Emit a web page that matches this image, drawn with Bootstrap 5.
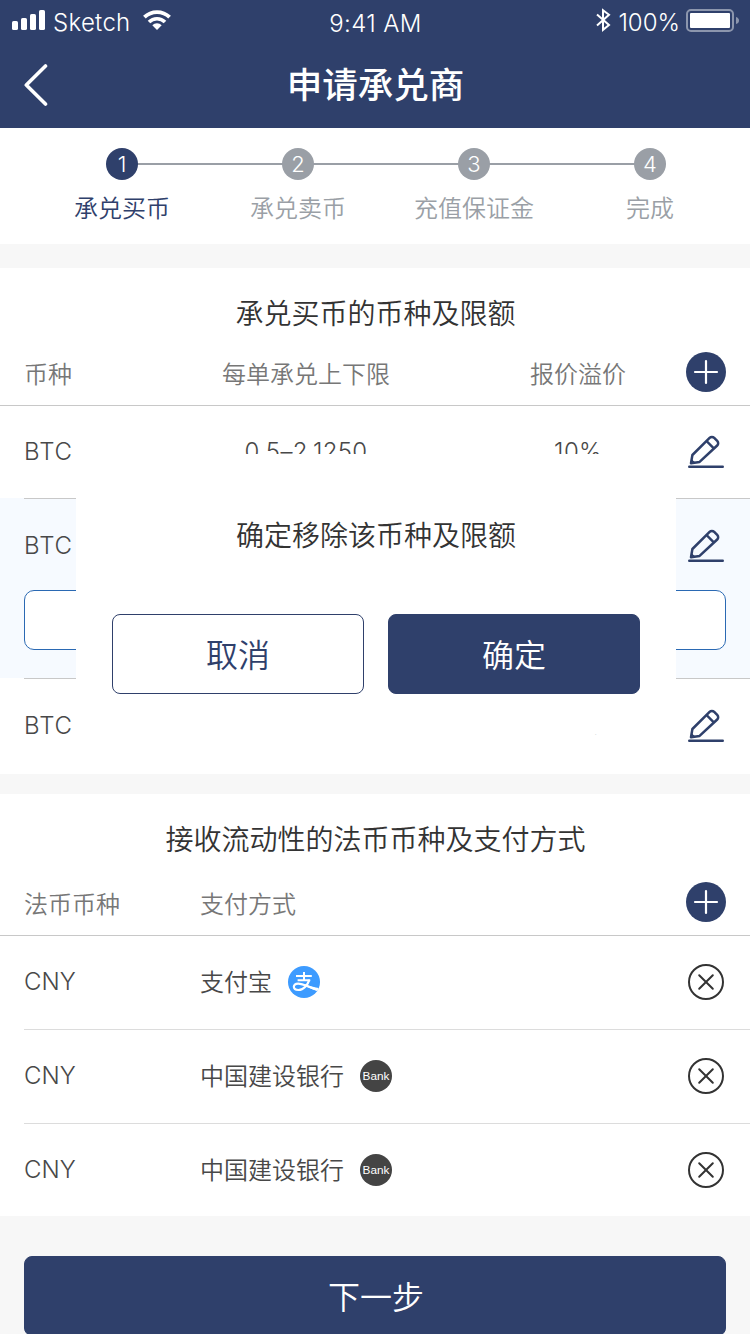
<!DOCTYPE html>
<html lang="zh-CN">
<head>
<meta charset="utf-8">
<meta name="viewport" content="width=device-width, initial-scale=1">
<title>申请承兑商</title>
<link href="https://cdn.jsdelivr.net/npm/bootstrap@5.3.0/dist/css/bootstrap.min.css" rel="stylesheet">
<style>
:root { --navy: #2f406b; --muted-step: #9a9fa6; }
html, body { height: 1334px; overflow: hidden; }
body { background: #f7f7f7; font-family: Inter, "Noto Sans CJK SC", sans-serif; font-size: 24px; font-weight: 350; line-height: 32px; color: #484848; width: 750px; }
svg { display: block; flex: none; }
.topbar { background: var(--navy); height: 128px; }
.statusbar { height: 40px; padding: 0 12px; }
.statusbar > div { flex: 1 1 0; }
.statusbar > div:last-child { margin-right: -1px; }
.carrier { margin: 5px 12px 0 8px; letter-spacing: .3px; }
.clock { padding-top: 7px; letter-spacing: .4px; }
.charge { margin: 6px 6px 0 7px; }
.titlebar { height: 88px; padding: 2px 24px 0; }
.titlebar h1 { font-size: 35.5px; line-height: 48px; font-weight: 500; margin: 0; padding: 2px 0 0 1px; }
.back-space { width: 24px; }
.steps { height: 116px; padding: 20px 12px 0 34px; }
.step { width: 176px; color: var(--muted-step); position: relative; }
.step .dot { width: 32px; height: 32px; line-height: 33px; font-size: 22px; border-radius: 50%; background: var(--muted-step); position: relative; z-index: 1; }
.step.on { color: var(--navy); }
.step.on .dot { background: var(--navy); }
.step + .step::before { content: ""; position: absolute; top: 15px; left: -88px; width: 176px; height: 2px; background: var(--muted-step); }
.step-name { margin-top: 13px; font-size: 24px; }
.panel-title { font-size: 28px; line-height: 40px; color: #333; padding: 26px 0 0 1px; font-weight: 350; margin: 0; }
.head { color: #777; border-bottom: 1px solid #c8c8c8; }
.head span { padding-top: 5px; }
.limits { display: grid; grid-template-columns: 84px 396px 148px 74px; align-items: center; }
.limits .pen { margin-right: 2px; }
.coin { letter-spacing: .9px; }
.amount { letter-spacing: .35px; }
.pays { display: grid; grid-template-columns: 176px 1fr 40px; align-items: center; }
.limits-panel { margin-top: 24px; height: 506px; }
.limits-panel .head { height: 72px; padding: 5px 24px 0; }
.pays-panel { margin-top: 20px; height: 422px; }
.pays-panel .head { height: 76px; padding: 9px 24px 0; }
.limit-row { height: 92px; padding: 0 24px; }
.picked .limit-row { height: 94px; padding-top: 1px; }
.picked .coin, .picked .pen { margin-top: -2px; }
.last-row { height: 93px; }
.last-row .amount { margin-top: 1px; }
.rule { height: 1px; margin-left: 24px; background: #c8c8c8; }
.picked { background: #f6faff; height: 180px; }
.remove-btn { width: 702px; height: 60px; margin: -3px 24px 0; background: #fff; border: 1px solid #2a69b3; border-radius: 10px; }
.pay-row { height: 93px; padding: 0 24px 2px; }
.pay-name { padding-top: 2px; }
.rule-light { height: 1px; margin-left: 24px; background: #dcdcdc; }
.bank { width: 32px; height: 32px; line-height: 32px; border-radius: 50%; background: #444; font-family: "Liberation Sans", sans-serif; font-size: 11.8px; font-weight: 400; margin-left: 16px; }
.btn-navy, .btn-line { height: 80px; border-radius: 8px; font-size: 32px; font-weight: 350; padding: 4px 0 0; border: 1px solid var(--navy); }
.btn-navy, .btn-navy:hover { background: var(--navy); color: #fff; }
.btn-line, .btn-line:hover { background: #fff; color: var(--navy); }
.confirm { position: absolute; left: 76px; top: 454px; width: 600px; height: 280px; background: #fff; padding: 62px 36px 40px; z-index: 5; }
.confirm p { font-size: 28px; line-height: 40px; color: #333; margin: 0 0 58px; }
.next { margin: 40px 24px 0; width: 702px; padding-left: 2px; }
</style>
</head>
<body class="position-relative">
<svg width="0" height="0" class="position-absolute">
  <symbol id="plus" viewBox="0 0 40 40"><circle cx="20" cy="20" r="20" fill="#2f406b"/><path d="M20 9v22M9 20h22" stroke="#fff" stroke-width="2.2" stroke-linecap="round"/></symbol>
  <symbol id="pen" viewBox="0 0 36 34" fill="none" stroke="#2f406b">
    <path d="M1.200 31.800h33.600" stroke-width="2.4" stroke-linecap="round"/>
    <path d="M3 28.300 4.400 20 21.600 2.900a3.200 3.200 0 0 1 4.600 0L29.200 5.900a3.200 3.200 0 0 1 0 4.600L11.600 26.900z" stroke-width="2.5" stroke-linejoin="round"/>
    <path d="M18.600 6.200l7.200 7.200" stroke-width="2.4"/>
    <path d="M3 28.400 3.600 24.800 7 27.600z" fill="#2f406b" stroke-width="1"/>
  </symbol>
  <symbol id="close" viewBox="0 0 36 36" fill="none" stroke="#333" stroke-width="2"><circle cx="18" cy="18" r="17"/><path d="M11.2 11.2l13.6 13.6M24.8 11.2 11.2 24.8" stroke-linecap="round"/></symbol>
</svg>

<header class="topbar text-white">
  <div class="statusbar d-flex align-items-center">
    <div class="d-flex align-items-center">
      <svg width="33" height="20" fill="#fff"><rect y="11" width="6" height="9" rx="1.6"/><rect x="9" y="8" width="6" height="12" rx="1.6"/><rect x="18" y="4" width="6" height="16" rx="1.6"/><rect x="27" width="6" height="20" rx="1.6"/></svg>
      <span class="carrier">Sketch</span>
      <svg width="28" height="20" fill="none" stroke="#fff"><path d="M1.4 7.2a18 18 0 0 1 25.2 0" stroke-width="3.8"/><path d="M6 12a11.3 11.3 0 0 1 16 0" stroke-width="3.6"/><path d="M14 20 9.3 15.2a6.7 6.7 0 0 1 9.4 0z" fill="#fff" stroke="none"/></svg>
    </div>
    <div class="text-center clock">9:41 AM</div>
    <div class="d-flex align-items-center justify-content-end">
      <svg width="15" height="24" fill="none" stroke="#fff" stroke-width="2"><path d="M1 6.500 13 17 7 21.800V2.200l6 4.600L1 17.500"/></svg>
      <span class="charge">100%</span>
      <svg width="53" height="24"><rect x="1" y="2" width="46" height="21" rx="4" fill="none" stroke="#fff" stroke-opacity=".45" stroke-width="2"/><rect x="4" y="5" width="40" height="15" rx="1" fill="#fff"/><path d="M50 9q3 1 3 3.500T50 16z" fill="#fff" fill-opacity=".45"/></svg>
    </div>
  </div>
  <div class="titlebar d-flex align-items-center">
    <svg width="24" height="42" fill="none" stroke="#fff" stroke-width="3.6" stroke-linecap="round" stroke-linejoin="round"><path d="M21.500 2 2.300 21l19.200 19"/></svg>
    <h1 class="flex-grow-1 text-center">申请承兑商</h1>
    <span class="back-space"></span>
  </div>
</header>

<nav class="steps d-flex bg-white text-center">
  <div class="step on"><div class="dot text-white mx-auto">1</div><div class="step-name">承兑买币</div></div>
  <div class="step"><div class="dot text-white mx-auto">2</div><div class="step-name">承兑卖币</div></div>
  <div class="step"><div class="dot text-white mx-auto">3</div><div class="step-name">充值保证金</div></div>
  <div class="step"><div class="dot text-white mx-auto">4</div><div class="step-name">完成</div></div>
</nav>

<section class="bg-white limits-panel">
  <h2 class="panel-title text-center">承兑买币的币种及限额</h2>
  <div class="head limits"><span>币种</span><span class="text-center">每单承兑上下限</span><span class="text-center">报价溢价</span><svg width="40" height="40" class="ms-auto"><use href="#plus"/></svg></div>
  <div class="limit-row limits"><span class="coin">BTC</span><span class="text-center amount">0.5–2.1250</span><span class="text-center amount">10%</span><svg width="36" height="34" class="ms-auto pen"><use href="#pen"/></svg></div>
  <div class="picked">
    <div class="rule"></div>
    <div class="limit-row limits"><span class="coin">BTC</span><span></span><span></span><svg width="36" height="34" class="ms-auto pen"><use href="#pen"/></svg></div>
    <div class="remove-btn"></div>
  </div>
  <div class="rule"></div>
  <div class="limit-row limits last-row"><span class="coin">BTC</span><span class="text-center amount">0.5–2.1250</span><span class="text-center amount">10%</span><svg width="36" height="34" class="ms-auto pen"><use href="#pen"/></svg></div>
</section>

<section class="bg-white pays-panel">
  <h2 class="panel-title text-center">接收流动性的法币币种及支付方式</h2>
  <div class="head pays"><span>法币币种</span><span>支付方式</span><svg width="40" height="40"><use href="#plus"/></svg></div>
  <div class="pay-row pays"><span>CNY</span>
    <span class="d-flex align-items-center"><span class="pay-name">支付宝</span>
      <svg width="32" height="32" class="ms-3" fill="none" stroke="#fff"><circle cx="16" cy="16" r="16" fill="#3d9bff" stroke="none"/><path d="M8 10h15.800M16 6v8.500M9.600 14.200h12.600" stroke-width="2"/><path d="M21.300 13.800C19.800 18.500 15.800 24 10.400 24c-6 0-6-6.300-.4-6.400 5.200 0 10.400 3.400 19.400 6.200" stroke-width="2.200"/><path d="M18.800 18.900c4 1.400 8.200 2.500 12 3.100l-1.500 3c-4-1.100-8.200-3-12-4.700z" fill="#fff" stroke="none"/></svg>
    </span>
    <svg width="36" height="36" class="mx-auto"><use href="#close"/></svg></div>
  <div class="rule-light"></div>
  <div class="pay-row pays"><span>CNY</span><span class="d-flex align-items-center"><span class="pay-name">中国建设银行</span><span class="bank text-white text-center">Bank</span></span><svg width="36" height="36" class="mx-auto"><use href="#close"/></svg></div>
  <div class="rule-light"></div>
  <div class="pay-row pays"><span>CNY</span><span class="d-flex align-items-center"><span class="pay-name">中国建设银行</span><span class="bank text-white text-center">Bank</span></span><svg width="36" height="36" class="mx-auto"><use href="#close"/></svg></div>
</section>

<button class="btn btn-navy next">下一步</button>

<div class="confirm" role="dialog">
  <p class="text-center">确定移除该币种及限额</p>
  <div class="d-flex gap-4"><button class="btn btn-line flex-fill w-50">取消</button><button class="btn btn-navy flex-fill w-50">确定</button></div>
</div>

<script src="https://cdn.jsdelivr.net/npm/bootstrap@5.3.0/dist/js/bootstrap.bundle.min.js"></script>
</body>
</html>
